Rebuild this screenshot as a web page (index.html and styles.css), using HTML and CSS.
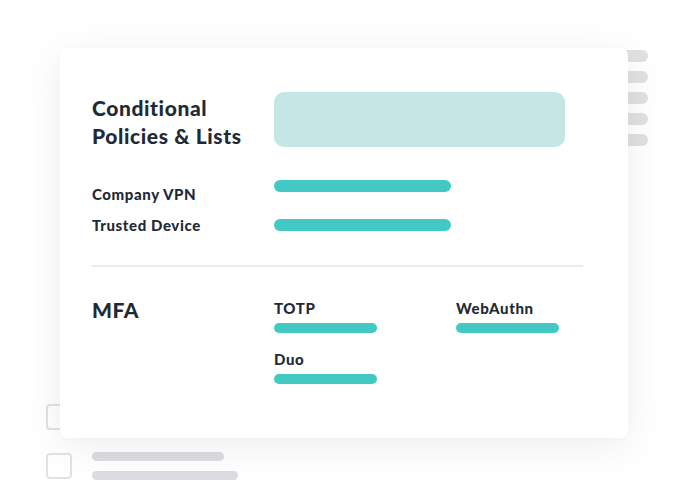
FILE: index.html
```html
<!DOCTYPE html>
<html>
<head>
<meta charset="utf-8">
<link rel="stylesheet" href="styles.css">
</head>
<body>
<div class="stage">
  <div class="backdrop">
    <div class="side-bars">
      <span class="gbar"></span>
      <span class="gbar"></span>
      <span class="gbar"></span>
      <span class="gbar"></span>
      <span class="gbar"></span>
    </div>
    <div class="check-list">
      <div class="check-row">
        <span class="checkbox"></span>
        <div class="lines"><span class="line l1"></span><span class="line l2"></span></div>
      </div>
      <div class="check-row">
        <span class="checkbox"></span>
        <div class="lines"><span class="line l1"></span><span class="line l2"></span></div>
      </div>
    </div>
  </div>

  <div class="card">
    <div class="sec-head">
      <h2 class="title head-title">Conditional<br>Policies &amp; Lists</h2>
      <div class="hero-box"></div>
    </div>
    <div class="policies">
      <div class="labels">
        <div class="label">Company VPN</div>
        <div class="label">Trusted Device</div>
      </div>
      <div class="bars">
        <span class="tbar wide"></span>
        <span class="tbar wide"></span>
      </div>
    </div>
    <div class="divider"></div>
    <div class="mfa">
      <h2 class="title mfa-title">MFA</h2>
      <div class="mfa-grid">
        <div class="opt"><div class="label">TOTP</div><span class="tbar short"></span></div>
        <div class="opt"><div class="label">WebAuthn</div><span class="tbar short"></span></div>
        <div class="opt"><div class="label">Duo</div><span class="tbar short"></span></div>
      </div>
    </div>
  </div>
</div>
</body>
</html>
```

FILE: styles.css
```css
* { box-sizing: border-box; }
html, body { margin: 0; padding: 0; background: #ffffff; }
body {
  width: 694px;
  height: 500px;
  overflow: hidden;
  font-family: "Lato", "Open Sans", sans-serif;
  color: #1f2a36;
}
.stage {
  position: relative;
  width: 694px;
  height: 500px;
}
.backdrop {
  display: flex;
  flex-direction: column;
  justify-content: space-between;
  height: 500px;
  padding: 50px 46px 20px 46px;
}
.side-bars {
  align-self: flex-end;
  display: flex;
  flex-direction: column;
  gap: 9px;
}
.gbar {
  display: block;
  width: 60px;
  height: 12px;
  border-radius: 6px;
  background: #e0e1e3;
}
.check-list {
  display: flex;
  flex-direction: column;
  gap: 21px;
}
.check-row {
  display: flex;
  align-items: center;
  gap: 20px;
}
.checkbox {
  width: 26px;
  height: 26px;
  border: 2px solid #e2e2e4;
  border-radius: 4px;
  background: #fff;
}
.lines {
  display: flex;
  flex-direction: column;
  gap: 10px;
}
.line {
  display: block;
  height: 9px;
  border-radius: 5px;
  background: #dcdde0;
}
.l1 { width: 132px; }
.l2 { width: 146px; }

.card {
  position: absolute;
  left: 60px;
  top: 48px;
  width: 568px;
  height: 390px;
  background: #fff;
  border-radius: 8px;
  box-shadow: 0 8px 44px rgba(0, 0, 0, 0.07), 0 2px 8px rgba(0, 0, 0, 0.02);
  padding: 44px 45px 0 32px;
}
.sec-head {
  display: flex;
  align-items: flex-start;
}
.title {
  margin: 0;
  width: 182px;
  flex-shrink: 0;
  font-size: 21px;
  line-height: 28px;
  font-weight: 900;
  letter-spacing: 0.6px;
  color: #1f2a36;
  white-space: nowrap;
}
.head-title {
  margin-top: 2px;
  margin-bottom: -2px;
}
.hero-box {
  width: 291px;
  height: 55px;
  border-radius: 10px;
  background: #c4e6e4;
}
.policies {
  display: flex;
}
.labels {
  width: 182px;
  flex-shrink: 0;
  padding-top: 36px;
  display: flex;
  flex-direction: column;
  gap: 11px;
}
.label {
  font-size: 15px;
  line-height: 20px;
  font-weight: 900;
  letter-spacing: 0.6px;
  color: #1f2a36;
  white-space: nowrap;
}
.bars {
  padding-top: 32px;
  display: flex;
  flex-direction: column;
  gap: 27px;
}
.tbar {
  display: block;
  height: 12px;
  border-radius: 6px;
  background: #43c9c3;
}
.tbar.wide { width: 177px; }
.tbar.short { width: 103px; height: 10px; border-radius: 5px; margin-top: 5px; }
.divider {
  margin-top: 30px;
  height: 2px;
  background: #ebebeb;
}
.mfa {
  display: flex;
  padding-top: 31px;
}
.mfa-title {
  line-height: 20px;
  padding-top: 2px;
}
.mfa-grid {
  display: grid;
  grid-template-columns: 182px 103px;
  row-gap: 16px;
}
```
